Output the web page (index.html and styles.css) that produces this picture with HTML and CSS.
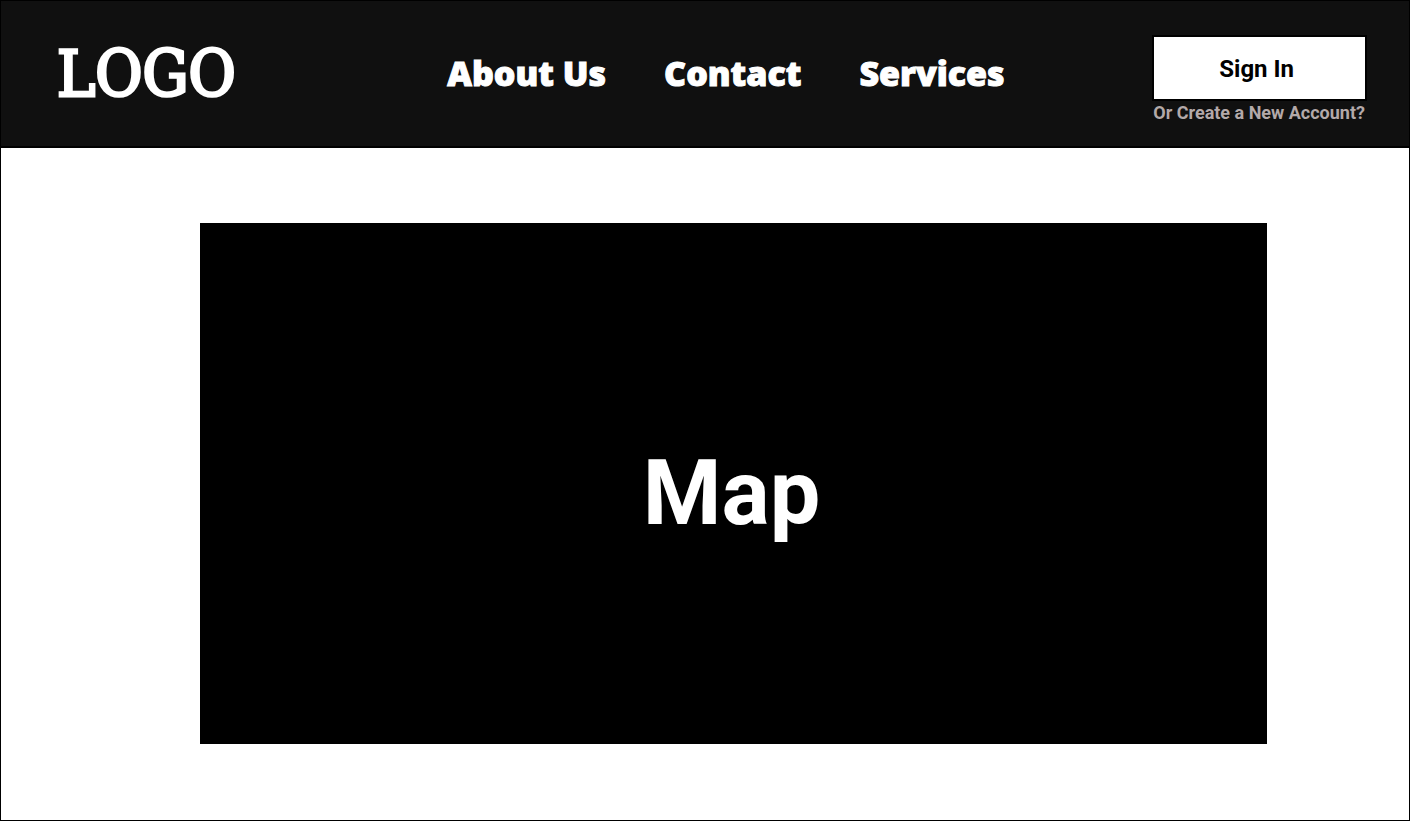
FILE: index.html
```html
<!DOCTYPE html>
<html lang="en">
<head>
<meta charset="utf-8">
<title>Home</title>
<link rel="stylesheet" href="styles.css">
</head>
<body>
<div class="page">
  <header class="header">
    <a class="logo" href="#">LOGO</a>
    <nav class="nav">
      <a class="nav-link" href="#about">About Us</a>
      <a class="nav-link" href="#contact">Contact</a>
      <a class="nav-link" href="#services">Services</a>
    </nav>
    <div class="account">
      <button class="sign-in" type="button">Sign In</button>
      <a class="create" href="#create">Or Create a New Account?</a>
    </div>
  </header>
  <main class="main">
    <section class="map"><h1 class="map-title">Map</h1></section>
  </main>
</div>
</body>
</html>
```

FILE: styles.css
```css
* { box-sizing: border-box; }
body { margin: 0; font-family: Roboto, sans-serif; background: #fff; }
.page { min-height: 100vh; display: flex; flex-direction: column; border: 1px solid #000; }
.header {
  display: grid;
  grid-template-columns: 1fr auto 1fr;
  align-items: start;
  padding: 34px 42px 21px 56px;
  background: #101010;
  border-bottom: 2px solid #000;
}
.logo { color: #fff; font-family: "DejaVu Serif Condensed", "DejaVu Serif", serif; font-size: 64px; line-height: 78px; font-weight: 400; -webkit-text-stroke: 3px #fff; text-decoration: none; }
.nav { display: flex; gap: 58px; padding: 14px 0 0 28px; }
.nav-link { color: #fff; font-family: "Noto Sans", sans-serif; font-size: 34px; line-height: 48px; font-weight: 900; -webkit-text-stroke: 1px #fff; text-decoration: none; }
.account { justify-self: end; display: flex; flex-direction: column; align-items: stretch; }
.sign-in { height: 66px; padding: 2px 12px 0 6px; border: 2px solid #000; background: #fff; color: #000; font: 700 24px/28px Roboto, sans-serif; }
.create { padding: 0 2px 0 1px; color: #b3a9a9; font-size: 18px; line-height: 24px; font-weight: 700; text-decoration: none; }
.main { flex: 1; display: flex; padding: 75px 142px 76px 199px; }
.map { flex: 1; display: flex; align-items: center; justify-content: center; padding: 20px 4px 0 0; background: #000; }
.map-title { margin: 0; color: #fff; font-size: 90px; line-height: 106px; font-weight: 700; }
```
